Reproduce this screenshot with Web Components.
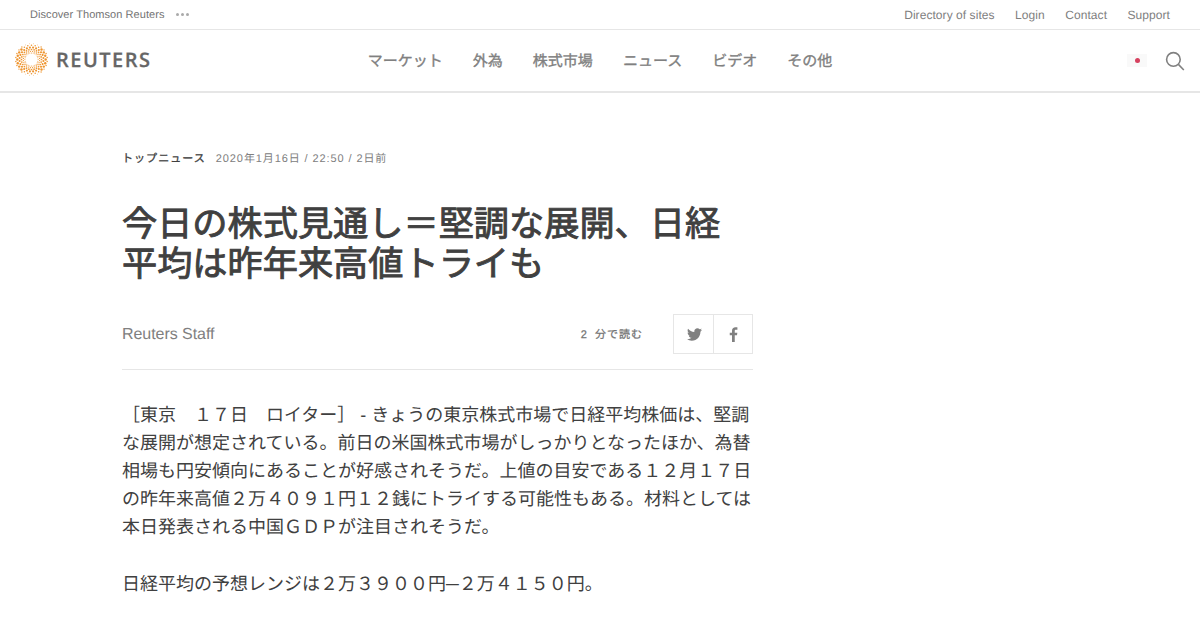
<!DOCTYPE html>
<html lang="ja">
<head>
<meta charset="utf-8">
<title>今日の株式見通し</title>
<style>
  html, body { margin: 0; padding: 0; background: #fff; }
  body { font-family: "Liberation Sans", "Noto Sans CJK JP", sans-serif; height: 630px; overflow: hidden; text-rendering: geometricPrecision; }
</style>
</head>
<body>
<top-bar></top-bar>
<main-nav></main-nav>
<news-article>
  <article-meta slot="meta" section="トップニュース" stamp="2020年1月16日 / 22:50 / 2日前"></article-meta>
  <h1 slot="title">今日の株式見通し＝堅調な展開、日経平均は昨年来高値トライも</h1>
  <article-byline slot="byline" author="Reuters Staff" minutes="2"></article-byline>
  <p>［東京　１７日　ロイター］ - きょうの東京株式市場で日経平均株価は、堅調な展開が想定されている。前日の米国株式市場がしっかりとなったほか、為替相場も円安傾向にあることが好感されそうだ。上値の目安である１２月１７日の昨年来高値２万４０９１円１２銭にトライする可能性もある。材料としては本日発表される中国ＧＤＰが注目されそうだ。</p>
  <p>日経平均の予想レンジは２万３９００円─２万４１５０円。</p>
</news-article>

<script>
class TopBar extends HTMLElement {
  connectedCallback() {
    this.attachShadow({ mode: 'open' });
    this.shadowRoot.innerHTML = `
      <style>
        :host { display: flex; justify-content: space-between; align-items: center; height: 29px; padding: 0 30px; border-bottom: 1px solid #e6e6e6; font-size: 12px; color: #808080; }
        .left { display: flex; align-items: center; gap: 11px; font-size: 11px; letter-spacing: .06px; color: #737373; }
        .dots { display: flex; gap: 2px; }
        .dots i { width: 3px; height: 3px; border-radius: 50%; background: #aaa; }
        nav { display: flex; gap: 20.5px; letter-spacing: .06px; }
      </style>
      <div class="left"><span>Discover Thomson Reuters</span><span class="dots"><i></i><i></i><i></i></span></div>
      <nav><span>Directory of sites</span><span>Login</span><span>Contact</span><span>Support</span></nav>
    `;
  }
}

class ReutersLogo extends HTMLElement {
  connectedCallback() {
    this.attachShadow({ mode: 'open' });
    // same dot count on every ring, each ring turned half a step
    let dots = '';
    const rings = [[6.6, .5], [8.2, .65], [10, .85], [12, 1.05], [14.2, 1.2], [15.8, .7]];
    rings.forEach(([r, size], k) => {
      for (let i = 0; i < 24; i++) {
        const a = (i + (k % 2) / 2) / 24 * Math.PI * 2;
        const x = 16.5 + r * Math.cos(a), y = 16.5 + r * Math.sin(a);
        const fade = k >= 4 && Math.abs(Math.cos(a)) < .55 ? .65 : 1;
        dots += `<circle cx="${x.toFixed(2)}" cy="${y.toFixed(2)}" r="${(size * fade).toFixed(2)}"/>`;
      }
    });
    this.shadowRoot.innerHTML = `
      <style>
        :host { display: flex; align-items: center; gap: 8px; padding-bottom: 2px; }
        svg { display: block; }
        span { font-family: "Open Sans", sans-serif; font-weight: 600; font-size: 20px; letter-spacing: 1.5px; color: #666; -webkit-text-stroke: .25px #666; line-height: 1; }
      </style>
      <svg width="33" height="33" viewBox="0 0 33 33" fill="#ee9530">${dots}</svg>
      <span>REUTERS</span>
    `;
  }
}

class MainNav extends HTMLElement {
  connectedCallback() {
    this.attachShadow({ mode: 'open' });
    this.shadowRoot.innerHTML = `
      <style>
        :host { display: grid; grid-template-columns: 1fr auto 1fr; align-items: center; height: 61px; padding: 0 15px; border-bottom: 2px solid #e6e6e6; }
        nav { display: flex; gap: 30px; font-size: 15px; color: #808080; -webkit-text-stroke: .35px #808080; }
        .tools { display: flex; justify-content: flex-end; align-items: center; gap: 18px; }
        .flag { width: 20px; height: 13px; background: #f9f9f9; display: flex; align-items: center; justify-content: center; }
        .flag i { width: 5px; height: 5px; border-radius: 50%; background: #d6415f; }
        svg { display: block; }
      </style>
      <reuters-logo></reuters-logo>
      <nav><span>マーケット</span><span>外為</span><span>株式市場</span><span>ニュース</span><span>ビデオ</span><span>その他</span></nav>
      <div class="tools">
        <span class="flag"><i></i></span>
        <svg width="20" height="20" viewBox="0 0 20 20" fill="none" stroke="#808080" stroke-width="1.6"><circle cx="8.4" cy="8.4" r="6.8"/><path d="M13.4 13.4l5.4 5.6"/></svg>
      </div>
    `;
  }
}

class NewsArticle extends HTMLElement {
  connectedCallback() {
    this.attachShadow({ mode: 'open' });
    this.shadowRoot.innerHTML = `
      <style>
        :host { display: block; width: 631px; margin-left: 122px; padding-top: 57px; }
        ::slotted(h1) { margin: 39px 0 29px; font-size: 35.2px; line-height: 40px; font-weight: 400; color: #404040; -webkit-text-stroke: .9px #404040; }
        ::slotted(p) { margin: 0 0 29px; font-size: 18px; line-height: 28px; color: #404040; }
      </style>
      <slot name="meta"></slot>
      <slot name="title"></slot>
      <slot name="byline"></slot>
      <slot></slot>
    `;
  }
}

class ArticleMeta extends HTMLElement {
  connectedCallback() {
    this.attachShadow({ mode: 'open' });
    this.shadowRoot.innerHTML = `
      <style>
        :host { display: flex; align-items: center; gap: 10px; height: 16px; font-size: 11px; letter-spacing: .9px; color: #808080; }
        b { color: #404040; font-weight: 400; letter-spacing: 1.05px; -webkit-text-stroke: .3px #404040; }
      </style>
      <b>${this.getAttribute('section')}</b><span>${this.getAttribute('stamp')}</span>
    `;
  }
}

class ArticleByline extends HTMLElement {
  connectedCallback() {
    this.attachShadow({ mode: 'open' });
    this.shadowRoot.innerHTML = `
      <style>
        :host { display: flex; align-items: center; height: 40px; padding-bottom: 15px; margin-bottom: 31px; border-bottom: 1px solid #e6e6e6; color: #808080; }
        .author { flex: 1; font-size: 16px; padding-top: 1px; letter-spacing: -.05px; }
        .read { font-size: 11px; letter-spacing: 1px; margin-right: 30px; color: #737373; -webkit-text-stroke: .25px #737373; }
        .read span { margin-right: 3px; }
        .share { display: flex; border: 1px solid #e6e6e6; }
        .share div { width: 39px; height: 38px; display: flex; align-items: center; justify-content: center; padding-left: 1px; box-sizing: border-box; }
        .share div + div { width: 39px; padding-left: 0; border-left: 1px solid #e6e6e6; }
        svg { display: block; fill: #808080; }
      </style>
      <span class="author">${this.getAttribute('author')}</span>
      <span class="read"><span>${this.getAttribute('minutes')}</span> 分で読む</span>
      <div class="share">
        <div><svg width="15" height="13" viewBox="0 0 24 20"><path d="M24 2.4c-.9.4-1.8.7-2.8.8 1-.6 1.8-1.6 2.2-2.7-1 .6-2 1-3.1 1.200C19.300.7 18 0 16.600 0c-2.700 0-4.900 2.200-4.900 4.900 0 .4 0 .8.100 1.100C7.700 5.800 4.100 3.900 1.700.9 1.200 1.600 1 2.500 1 3.400c0 1.700.9 3.200 2.200 4.100-.8 0-1.600-.2-2.200-.6v.1c0 2.400 1.700 4.400 3.900 4.800-.4.100-.8.200-1.300.2-.3 0-.6 0-.9-.1.600 2 2.400 3.400 4.600 3.400-1.700 1.300-3.800 2.100-6.100 2.100-.4 0-.8 0-1.200-.1C2.200 19.200 4.800 20 7.500 20c9.100 0 14-7.500 14-14v-.6c1-.7 1.800-1.600 2.500-3z"/></svg></div>
        <div><svg width="9" height="15" viewBox="0 0 10 18"><path d="M6.500 18V10h2.700l.4-3.100H6.500V4.900c0-.9.200-1.500 1.500-1.500h1.700V.6C9.400.5 8.400.4 7.300.4 4.900.4 3.200 1.900 3.200 4.600v2.300H.5V10h2.700v8z"/></svg></div>
      </div>
    `;
  }
}

customElements.define('reuters-logo', ReutersLogo);
customElements.define('top-bar', TopBar);
customElements.define('main-nav', MainNav);
customElements.define('article-meta', ArticleMeta);
customElements.define('article-byline', ArticleByline);
customElements.define('news-article', NewsArticle);
</script>
</body>
</html>
